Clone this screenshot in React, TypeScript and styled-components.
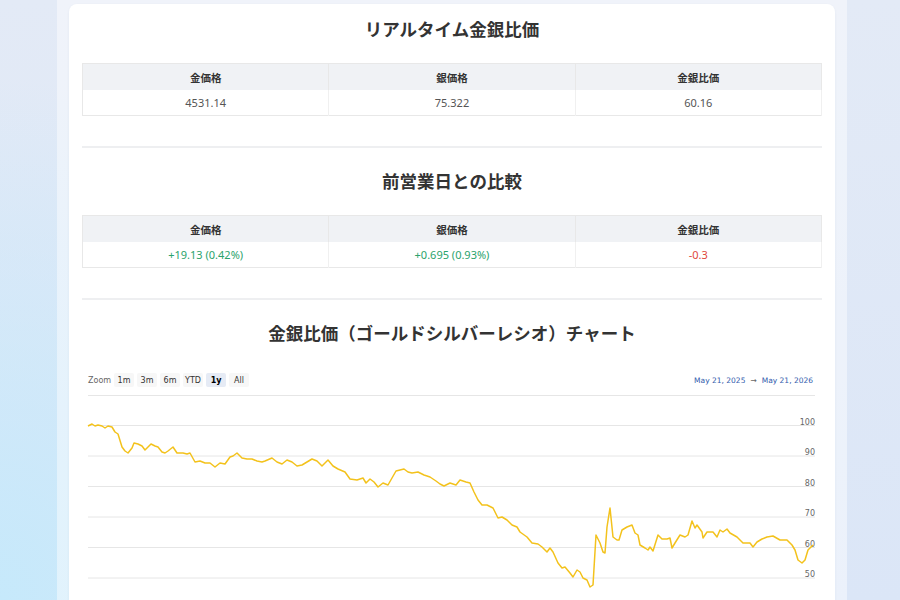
import React from 'react';
import styled, { createGlobalStyle } from 'styled-components';

const GlobalStyle = createGlobalStyle`
  html, body {
    margin: 0;
    padding: 0;
    height: 100%;
    overflow: hidden;
  }
  body {
    font-family: 'Noto Sans', 'Noto Sans CJK JP', sans-serif;
    background:
      radial-gradient(ellipse 420px 520px at 0% 100%, #c6e9fb 0%, rgba(198, 233, 251, 0) 100%),
      linear-gradient(180deg, #e3eaf6 0%, #dbe6f7 100%);
  }
`;

interface ICell {
  text: string;
  tone?: 'up' | 'down';
}

interface ITable {
  title: string;
  cells: ICell[];
}

const headers = ['金価格', '銀価格', '金銀比価'];

const tables: ITable[] = [
  {
    title: 'リアルタイム金銀比価',
    cells: [{ text: '4531.14' }, { text: '75.322' }, { text: '60.16' }],
  },
  {
    title: '前営業日との比較',
    cells: [
      { text: '+19.13 (0.42%)', tone: 'up' },
      { text: '+0.695 (0.93%)', tone: 'up' },
      { text: '-0.3', tone: 'down' },
    ],
  },
];

const zoomButtons = ['1m', '3m', '6m', 'YTD', '1y', 'All'];

// traced from the 1y ratio series, page coords
const trace: [number, number][] = [
  [88, 426], [92, 424], [95, 426], [98, 425], [102, 426], [105, 428], [108, 426], [112, 427],
  [115, 432], [118, 434], [122, 447], [125, 451], [128, 453], [132, 448], [134, 443], [138, 444],
  [142, 446], [145, 450], [148, 447], [151, 444], [155, 446], [158, 447], [162, 452], [165, 453],
  [168, 451], [173, 447], [177, 453], [180, 453], [183, 453], [187, 454], [190, 453], [195, 462],
  [200, 461], [205, 463], [210, 463], [215, 467], [220, 463], [225, 464], [230, 457], [233, 456],
  [237, 453], [242, 458], [247, 459], [252, 459], [257, 461], [262, 462], [265, 461], [272, 458],
  [277, 462], [282, 464], [287, 460], [292, 462], [297, 466], [302, 465], [307, 462], [312, 459],
  [317, 461], [322, 466], [328, 460], [333, 466], [338, 469], [345, 472], [350, 479], [357, 480],
  [363, 478], [366, 483], [370, 479], [374, 482], [378, 487], [383, 483], [388, 485], [392, 478],
  [396, 471], [400, 470], [404, 469], [408, 472], [412, 473], [418, 472], [424, 475], [430, 477],
  [436, 481], [440, 484], [444, 486], [450, 483], [456, 485], [460, 480], [466, 482], [470, 483],
  [474, 492], [478, 500], [482, 505], [487, 505], [493, 508], [498, 518], [502, 517], [507, 520],
  [512, 525], [517, 527], [520, 532], [527, 537], [532, 543], [538, 544], [542, 547], [547, 552],
  [550, 548], [553, 552], [558, 563], [562, 568], [565, 567], [570, 573], [573, 577], [577, 570],
  [580, 572], [583, 578], [587, 580], [590, 587], [593, 585], [596, 535], [600, 543], [603, 552],
  [605, 553], [607, 527], [610, 508], [613, 537], [617, 540], [619, 540], [622, 530], [627, 527],
  [632, 525], [635, 533], [638, 535], [640, 545], [645, 548], [648, 550], [650, 547], [653, 551],
  [658, 535], [662, 539], [667, 539], [670, 538], [672, 548], [675, 543], [680, 535], [685, 537],
  [688, 535], [692, 521], [695, 528], [697, 525], [702, 532], [703, 538], [707, 532], [713, 532],
  [717, 537], [720, 530], [723, 532], [727, 529], [730, 533], [737, 537], [743, 543], [750, 543],
  [753, 547], [757, 542], [762, 539], [767, 537], [773, 536], [780, 540], [787, 540], [792, 545],
  [795, 550], [798, 560], [802, 563], [805, 560], [808, 550], [813, 545],
];

const CHART_LEFT = 82;
const CHART_TOP = 395;
const gridValues = [100, 90, 80, 70, 60, 50];
const valueToY = (v: number) => 30.5 + (100 - v) * 3.05;

const App = () => {
  const points = trace.map(([x, y]) => `${x - CHART_LEFT},${y - CHART_TOP}`).join(' ');

  return (
    <>
      <GlobalStyle />
      <Page>
        <Card>
          {tables.map((table, i) => (
            <Section key={table.title} first={i === 0}>
              <Heading>{table.title}</Heading>
              <PriceTable>
                <thead>
                  <tr>
                    {headers.map((h) => (
                      <HeadCell key={h}>{h}</HeadCell>
                    ))}
                  </tr>
                </thead>
                <tbody>
                  <tr>
                    {table.cells.map((c, j) => (
                      <DataCell key={j} tone={c.tone}>
                        {c.text}
                      </DataCell>
                    ))}
                  </tr>
                </tbody>
              </PriceTable>
            </Section>
          ))}
          <Section>
            <Heading>金銀比価（ゴールドシルバーレシオ）チャート</Heading>
            <ChartBox>
              <Toolbar>
                <ZoomGroup>
                  <ZoomLabel>Zoom</ZoomLabel>
                  {zoomButtons.map((b) => (
                    <ZoomButton key={b} active={b === '1y'}>
                      {b}
                    </ZoomButton>
                  ))}
                </ZoomGroup>
                <DateRange>
                  <span>May 21, 2025</span>
                  <Arrow>→</Arrow>
                  <span>May 21, 2026</span>
                </DateRange>
              </Toolbar>
              <ChartSvg width="740" height="220" viewBox="0 0 740 220">
                <line x1="6" x2="733" y1="0.5" y2="0.5" stroke="#e6e6e6" />
                {gridValues.map((v) => (
                  <g key={v}>
                    <line x1="6" x2="733" y1={valueToY(v)} y2={valueToY(v)} stroke="#e6e6e6" />
                    <AxisText x="733" y={valueToY(v) - 1} textAnchor="end">
                      {v}
                    </AxisText>
                  </g>
                ))}
                <polyline
                  points={points}
                  fill="none"
                  stroke="#f3c21c"
                  strokeWidth="1.5"
                  strokeLinejoin="round"
                />
              </ChartSvg>
            </ChartBox>
          </Section>
        </Card>
      </Page>
    </>
  );
};

export default App;

const Page = styled.div`
  width: 766px;
  margin: 0 auto;
  padding: 4px 12px 0;
  min-height: 100vh;
  background: rgba(255, 255, 255, 0.45);
  position: relative;
  left: 2px;
`;

const Card = styled.div`
  background: #fff;
  border-radius: 8px;
  padding: 0 13px;
  box-shadow: 0 1px 3px rgba(40, 70, 120, 0.06);
  min-height: 700px;
`;

const Section = styled.section<{ first?: boolean }>`
  padding: ${(p) => (p.first ? '12px' : '20px')} 0 30px;
  border-top: ${(p) => (p.first ? 'none' : '2px solid #eeeff1')};
`;

const Heading = styled.h2`
  margin: 0 0 21px;
  font-size: 17.5px;
  line-height: 26px;
  font-weight: 700;
  color: #333;
  text-align: center;
  font-family: 'Noto Sans CJK JP', 'Noto Sans', sans-serif;
`;

const PriceTable = styled.table`
  width: 100%;
  border-collapse: collapse;
  table-layout: fixed;
  border: 1px solid #e8e8e8;
`;

const HeadCell = styled.th`
  height: 26px;
  padding: 0 8px;
  background: #f0f2f5;
  border-right: 1px solid #e8e8e8;
  font-size: 10.5px;
  font-weight: 700;
  color: #333;
  font-family: 'Noto Sans CJK JP', 'Noto Sans', sans-serif;
`;

const DataCell = styled.td<{ tone?: 'up' | 'down' }>`
  height: 25px;
  padding: 0 8px;
  border-right: 1px solid #f0f0f0;
  text-align: center;
  font-size: 11px;
  color: ${(p) => (p.tone === 'up' ? '#2ba36c' : p.tone === 'down' ? '#e0483b' : '#555')};
`;

const ChartBox = styled.div`
  padding-top: 6px;
`;

const Toolbar = styled.div`
  display: flex;
  justify-content: space-between;
  align-items: center;
  height: 14px;
  padding: 0 9px 0 6px;
  margin-bottom: 8px;
  font-family: 'DejaVu Sans', sans-serif;
`;

const ZoomGroup = styled.div`
  display: flex;
  align-items: center;
  gap: 3px;
`;

const ZoomLabel = styled.span`
  font-size: 8px;
  color: #666;
  margin-right: 0;
`;

const ZoomButton = styled.span<{ active?: boolean }>`
  min-width: 20px;
  height: 14px;
  padding: 0 2px;
  box-sizing: border-box;
  display: flex;
  align-items: center;
  justify-content: center;
  font-size: 8px;
  border-radius: 2px;
  background: ${(p) => (p.active ? '#e6ebf5' : '#f7f7f7')};
  color: ${(p) => (p.active ? '#000' : '#333')};
  font-weight: ${(p) => (p.active ? 700 : 400)};
`;

const DateRange = styled.div`
  display: flex;
  align-items: center;
  gap: 5px;
  font-size: 7.5px;
  color: #335cad;
`;

const Arrow = styled.span`
  color: #666;
`;

const ChartSvg = styled.svg`
  display: block;
`;

const AxisText = styled.text`
  font-family: 'DejaVu Sans', sans-serif;
  font-size: 8px;
  fill: #666;
`;
